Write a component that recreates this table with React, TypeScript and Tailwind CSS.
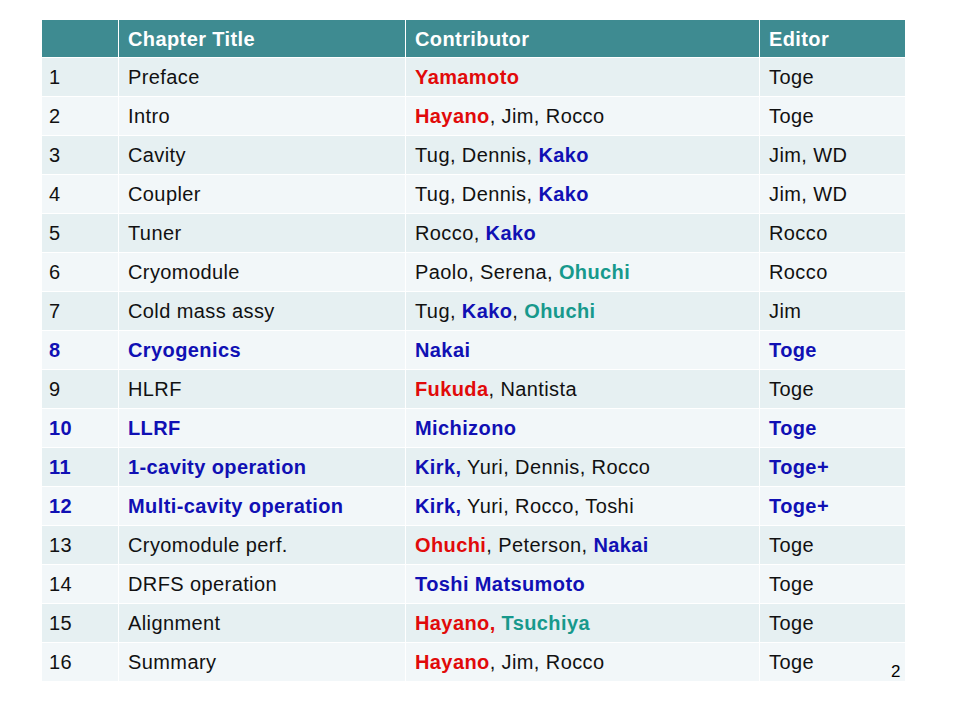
import React from "react";

type Seg = { t: string; c?: "r" | "b" | "g" };
type Row = { n: string; title: string; contrib: Seg[]; editor: string; blue?: boolean };

const rows: Row[] = [
  { n: "1", title: "Preface", contrib: [{ t: "Yamamoto", c: "r" }], editor: "Toge" },
  { n: "2", title: "Intro", contrib: [{ t: "Hayano", c: "r" }, { t: ", Jim, Rocco" }], editor: "Toge" },
  { n: "3", title: "Cavity", contrib: [{ t: "Tug, Dennis, " }, { t: "Kako", c: "b" }], editor: "Jim, WD" },
  { n: "4", title: "Coupler", contrib: [{ t: "Tug, Dennis, " }, { t: "Kako", c: "b" }], editor: "Jim, WD" },
  { n: "5", title: "Tuner", contrib: [{ t: "Rocco, " }, { t: "Kako", c: "b" }], editor: "Rocco" },
  { n: "6", title: "Cryomodule", contrib: [{ t: "Paolo, Serena, " }, { t: "Ohuchi", c: "g" }], editor: "Rocco" },
  { n: "7", title: "Cold mass assy", contrib: [{ t: "Tug, " }, { t: "Kako", c: "b" }, { t: ", " }, { t: "Ohuchi", c: "g" }], editor: "Jim" },
  { n: "8", title: "Cryogenics", contrib: [{ t: "Nakai", c: "b" }], editor: "Toge", blue: true },
  { n: "9", title: "HLRF", contrib: [{ t: "Fukuda", c: "r" }, { t: ", Nantista" }], editor: "Toge" },
  { n: "10", title: "LLRF", contrib: [{ t: "Michizono", c: "b" }], editor: "Toge", blue: true },
  { n: "11", title: "1-cavity operation", contrib: [{ t: "Kirk,", c: "b" }, { t: " Yuri, Dennis, Rocco" }], editor: "Toge+", blue: true },
  { n: "12", title: "Multi-cavity operation", contrib: [{ t: "Kirk,", c: "b" }, { t: " Yuri, Rocco, Toshi" }], editor: "Toge+", blue: true },
  { n: "13", title: "Cryomodule perf.", contrib: [{ t: "Ohuchi", c: "r" }, { t: ", Peterson, " }, { t: "Nakai", c: "b" }], editor: "Toge" },
  { n: "14", title: "DRFS operation", contrib: [{ t: "Toshi Matsumoto", c: "b" }], editor: "Toge" },
  { n: "15", title: "Alignment", contrib: [{ t: "Hayano,", c: "r" }, { t: " " }, { t: "Tsuchiya", c: "g" }], editor: "Toge" },
  { n: "16", title: "Summary", contrib: [{ t: "Hayano", c: "r" }, { t: ", Jim, Rocco" }], editor: "Toge" },
];

function segClass(c?: "r" | "b" | "g") {
  if (c === "r") return "font-bold text-[#e10a0a]";
  if (c === "b") return "font-bold text-[#1010b4]";
  if (c === "g") return "font-bold text-[#17998c]";
  return "text-[#111111]";
}

export default function App() {
  return (
    <div
      className="relative w-[960px] h-[720px] bg-white"
      style={{ fontFamily: '"Liberation Sans", Arial, sans-serif' }}
    >
      <div className="pt-[20px] pl-[42px]">
        <div className="grid grid-cols-[76px_286px_353px_145px] gap-[1px] bg-white w-[863px] text-[20px] tracking-[0.4px] leading-none">
          <div className="h-[37px] bg-[#3e8b91]" />
          <div className="h-[37px] bg-[#3e8b91] text-white font-bold flex items-center pl-[9px]">Chapter Title</div>
          <div className="h-[37px] bg-[#3e8b91] text-white font-bold flex items-center pl-[9px]">Contributor</div>
          <div className="h-[37px] bg-[#3e8b91] text-white font-bold flex items-center pl-[9px]">Editor</div>
          {rows.map((r, i) => {
            const bg = i % 2 === 0 ? "bg-[#e6f0f2]" : "bg-[#f2f7f9]";
            const tc = r.blue ? "font-bold text-[#1010b4]" : "text-[#111111]";
            return (
              <React.Fragment key={r.n}>
                <div className={`h-[38px] ${bg} ${tc} flex items-center pl-[7px]`}>{r.n}</div>
                <div className={`h-[38px] ${bg} ${tc} flex items-center pl-[9px] whitespace-pre`}>{r.title}</div>
                <div className={`h-[38px] ${bg} flex items-center pl-[9px] whitespace-pre`}>
                  {r.contrib.map((s, j) => (
                    <span key={j} className={segClass(s.c)}>{s.t}</span>
                  ))}
                </div>
                <div className={`h-[38px] ${bg} ${tc} flex items-center pl-[9px]`}>{r.editor}</div>
              </React.Fragment>
            );
          })}
        </div>
      </div>
      <div className="absolute left-[891px] top-[663px] text-[17px] leading-none text-black">2</div>
    </div>
  );
}
